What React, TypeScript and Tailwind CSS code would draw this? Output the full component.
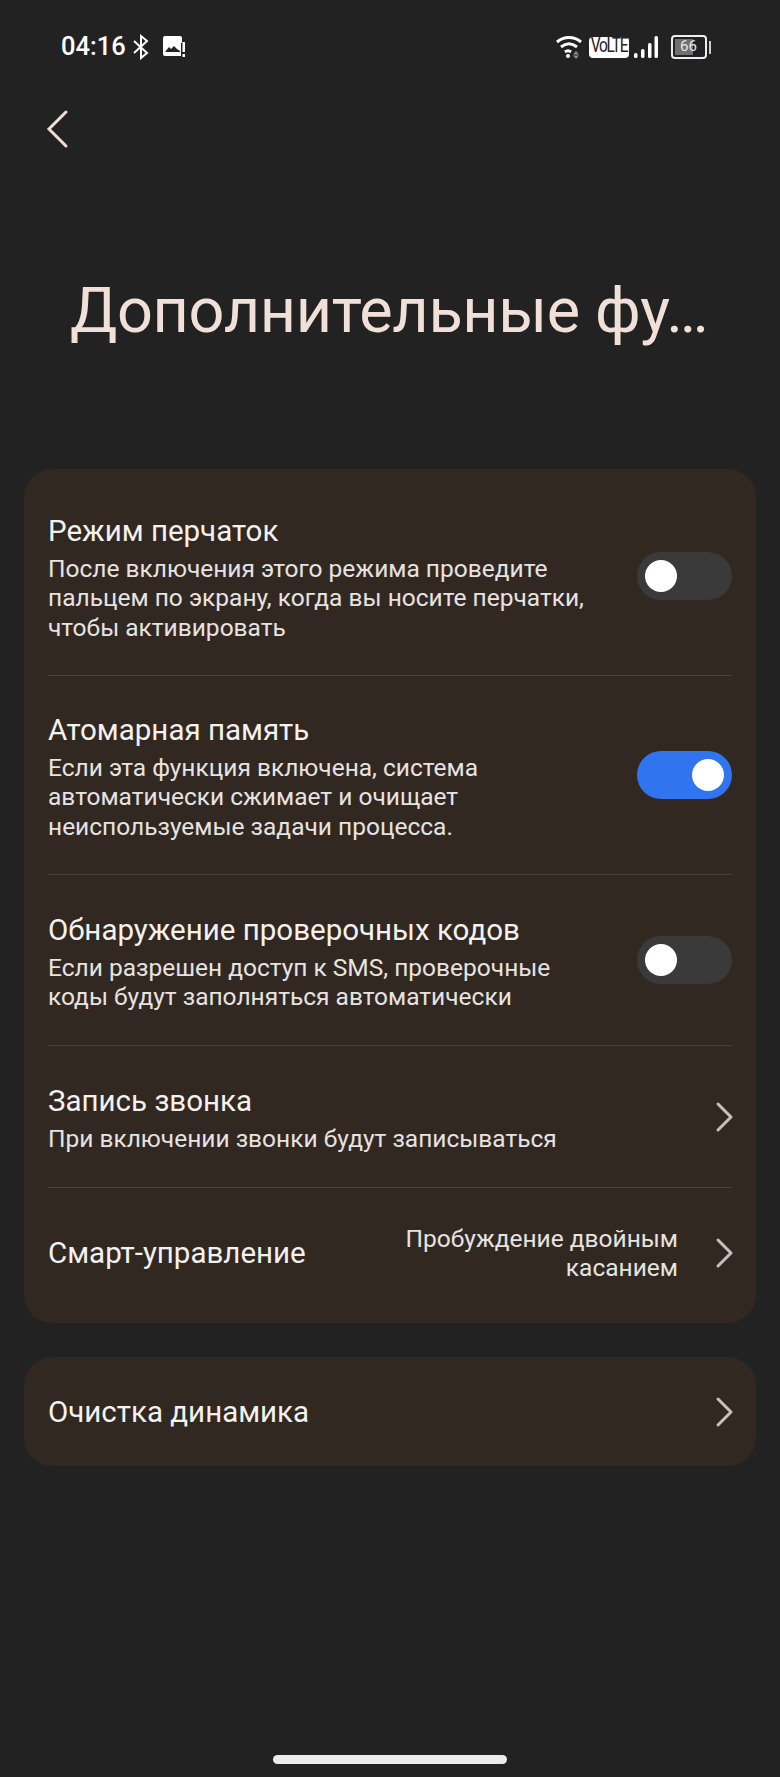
import type { ReactNode } from 'react'

interface RowProps {
  title: string
  lines?: string[]
  className: string
  divider?: boolean
  children?: ReactNode
}

function Toggle({ on = false }: { on?: boolean }) {
  return (
    <div
      className={`flex h-[48px] w-[95px] shrink-0 items-center rounded-full px-[8px] ${
        on ? 'justify-end bg-[#3074f0]' : 'justify-start bg-[#3a3a3a]'
      }`}
    >
      <div className="h-[32px] w-[32px] rounded-full bg-white" />
    </div>
  )
}

function Chevron() {
  return (
    <svg className="mr-[-3px] h-[32px] w-[20px] shrink-0" viewBox="0 0 20 32" fill="none" stroke="#c4c1be" strokeWidth="3" strokeLinecap="round" strokeLinejoin="round">
      <path d="M3 3l13 13L3 29" />
    </svg>
  )
}

function Row({ title, lines, className, divider = true, children }: RowProps) {
  return (
    <div className={`flex flex-col justify-center ${className} ${divider ? 'border-b border-[#4a413b]' : ''}`}>
      <div className="flex items-center justify-between">
        <div className={lines ? 'pt-[2px]' : ''}>
          <div className="text-[29.5px] leading-[38px] text-[#f4f2f0]">{title}</div>
          {lines && (
            <div className="mt-[4px] text-[24.5px] leading-[29.5px] text-[#e6e3e1]">
              {lines.map((line) => (
                <div key={line}>{line}</div>
              ))}
            </div>
          )}
        </div>
        {children}
      </div>
    </div>
  )
}

function StatusBar() {
  return (
    <div className="flex h-[94px] items-center justify-between pl-[61px] pr-[69px] text-white">
      <div className="flex items-center">
        <span className="text-[25.5px] font-medium leading-none">04:16</span>
        <svg className="ml-[6px] h-[26px] w-[18px]" viewBox="0 0 18 26" fill="none" stroke="#fff" strokeWidth="2">
          <path d="M2 7l13 12-6 5V2l6 5L2 19" />
        </svg>
        <svg className="ml-[12px] h-[24px] w-[24px]" viewBox="0 0 24 24">
          <path
            d="M3 1h15a2 2 0 0 1 2 2v5h-1v13H3a2 2 0 0 1-2-2V3a2 2 0 0 1 2-2z"
            fill="#fff"
          />
          <path d="M3 17l4-5 2 2 3-3 3 3 3 2v1z" fill="#222" />
          <rect x="20.5" y="7" width="2.5" height="10" fill="#fff" />
          <rect x="20.5" y="19" width="2.5" height="3" fill="#fff" />
        </svg>
      </div>
      <div className="flex items-center">
        <svg className="h-[24px] w-[28px]" viewBox="0 0 28 24" fill="none" stroke="#fff" strokeWidth="3">
          <path d="M2 7c7-6 17-6 24 0" />
          <path d="M6 12c5-4 11-4 16 0" />
          <path d="M10 17c2-1.6 4-1.6 6 0" />
          <circle cx="13" cy="21" r="2" fill="#fff" stroke="none" />
          <path d="M21 16l3 3.5h-6zM21 24l3-3.5h-6z" fill="#8a8a8a" stroke="none" />
        </svg>
        <div className="ml-[6px] flex h-[21px] w-[40px] items-center justify-center rounded-[4px] bg-white text-[#222]">
          <span className="scale-y-[1.3] text-[15.5px] leading-none tracking-[-1.2px]">VoLTE</span>
        </div>
        <svg className="ml-[4px] h-[24px] w-[26px]" viewBox="0 0 26 24" fill="#fff">
          <rect x="1" y="18" width="3.5" height="5" rx="1.5" />
          <rect x="8" y="14" width="3.5" height="9" rx="1.5" />
          <rect x="15" y="8" width="3.5" height="15" rx="1.5" />
          <rect x="21.5" y="1" width="3.5" height="22" rx="1.5" />
        </svg>
        <div className="ml-[12px] flex h-[24px] w-[36px] items-center rounded-[4px] border-2 border-[#eeeeee] p-[2px]">
          <div className="relative h-full w-[65%] bg-[#707070]">
            <span className="absolute left-[5px] top-[-1px] text-[15px] leading-[17px] text-[#e8e8e8]">66</span>
          </div>
        </div>
        <div className="ml-[2px] h-[13px] w-[2px] bg-[#cccccc]" />
      </div>
    </div>
  )
}

export default function App() {
  return (
    <div className="h-[1777px] w-[780px] overflow-hidden bg-[#222222] font-['Roboto',sans-serif]">
      <StatusBar />
      <div className="flex h-[70px] items-center pl-[44px]">
        <svg className="h-[40px] w-[26px]" viewBox="0 0 26 40" fill="none" stroke="#f0ddd3" strokeWidth="3" strokeLinecap="round">
          <path d="M22 3L5 20l17 17" />
        </svg>
      </div>
      <h1 className="mt-[113px] h-[192px] pl-[70px] text-[63px] font-normal leading-[68px] tracking-[-0.35px] text-[#f0e0d8]">
        Дополнительные фу…
      </h1>
      <div className="mx-[24px] rounded-[28px] bg-[#322822] px-[24px] pt-[8px]">
        <Row
          title="Режим перчаток"
          lines={[
            'После включения этого режима проведите',
            'пальцем по экрану, когда вы носите перчатки,',
            'чтобы активировать',
          ]}
          className="h-[199px]"
        >
          <Toggle />
        </Row>
        <Row
          title="Атомарная память"
          lines={[
            'Если эта функция включена, система',
            'автоматически сжимает и очищает',
            'неиспользуемые задачи процесса.',
          ]}
          className="h-[199px]"
        >
          <Toggle on />
        </Row>
        <Row
          title="Обнаружение проверочных кодов"
          lines={['Если разрешен доступ к SMS, проверочные', 'коды будут заполняться автоматически']}
          className="h-[171px]"
        >
          <Toggle />
        </Row>
        <Row title="Запись звонка" lines={['При включении звонки будут записываться']} className="h-[142px]">
          <Chevron />
        </Row>
        <Row title="Смарт-управление" className="h-[135px] pb-[5px]" divider={false}>
          <div className="flex items-center">
            <div className="mr-[37px] text-right text-[24.5px] leading-[29.5px] text-[#e6e3e1]">
              <div>Пробуждение двойным</div>
              <div>касанием</div>
            </div>
            <Chevron />
          </div>
        </Row>
      </div>
      <div className="mx-[24px] mt-[34px] rounded-[28px] bg-[#322822] px-[24px]">
        <Row title="Очистка динамика" className="h-[109px]" divider={false}>
          <Chevron />
        </Row>
      </div>
      <div className="mx-auto mt-[289px] h-[9px] w-[234px] rounded-full bg-[#ececec]" />
    </div>
  )
}
